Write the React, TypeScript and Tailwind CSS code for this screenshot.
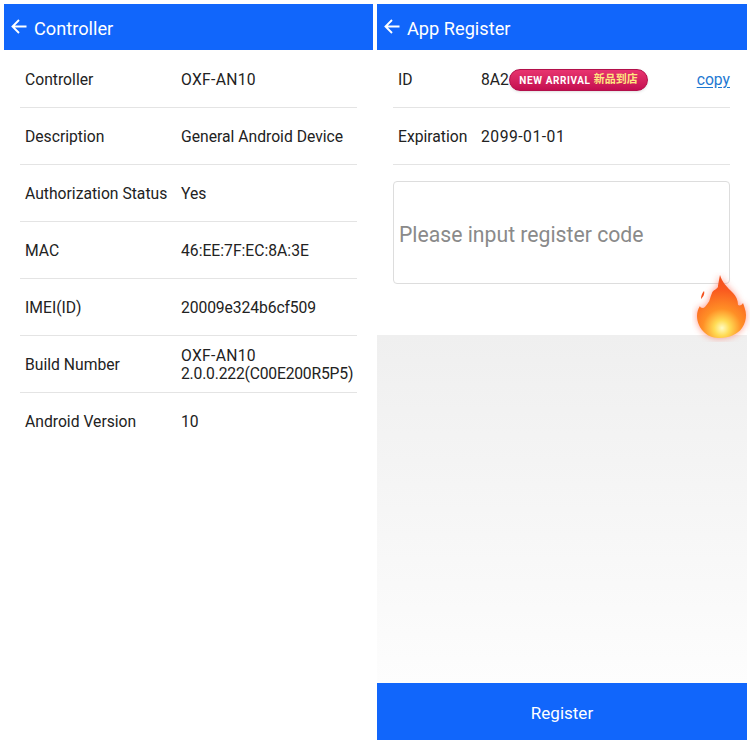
import React from "react"

type Row = {
  label: string
  value: React.ReactNode
}

const controllerRows: Row[] = [
  { label: "Controller", value: <span className="tracking-[0.3px]">OXF-AN10</span> },
  { label: "Description", value: "General Android Device" },
  { label: "Authorization Status", value: "Yes" },
  { label: "MAC", value: "46:EE:7F:EC:8A:3E" },
  { label: "IMEI(ID)", value: <span className="tracking-[-0.1px]">20009e324b6cf509</span> },
  {
    label: "Build Number",
    value: (
      <div className="pb-[1px]">
        <span className="tracking-[0.3px]">OXF-AN10</span>
        <br />
        <span className="tracking-[-0.2px]">2.0.0.222(C00E200R5P5)</span>
      </div>
    ),
  },
]

const Header = ({ title }: { title: string }) => (
  <div className="flex h-[46px] items-center bg-[#1166fb] pl-[6px] text-white">
    <svg width="18" height="18" viewBox="0 0 18 18" fill="none" stroke="currentColor" strokeWidth="1.9">
      <path d="M16.5 8.5H2.5M9 2L2.5 8.5L9 15" />
    </svg>
    <span className="ml-[6px] pt-[3px] text-[18.2px]">{title}</span>
  </div>
)

const flamePath =
  "M28 3C27 8 26 13 26 15C24 18 21 18 20 21C18 25 18 29 16 31C14 34 12 36 11 36C9 36 8 35 8 34C6 37 5 40 5 44C5 50 8 57 13 61C17 65 23 66 28 66C37 66 46 62 50 56C53 52 54 47 54 43C54 39 52 34 51 31C50 33 48 34 46 33C46 28 44 24 41 21C35 15 30 10 28 3Z"

const Fire = () => (
  <svg className="absolute left-[692px] top-[272px]" width="58" height="70" viewBox="0 0 58 70">
    <defs>
      <radialGradient id="flame" gradientUnits="userSpaceOnUse" cx="30" cy="56" r="48">
        <stop offset="0" stopColor="#fffbc4" />
        <stop offset="0.16" stopColor="#ffdc55" />
        <stop offset="0.4" stopColor="#ff8f26" />
        <stop offset="0.8" stopColor="#f9591f" />
        <stop offset="1" stopColor="#f4511e" />
      </radialGradient>
      <filter id="glow" x="-30%" y="-30%" width="160%" height="160%">
        <feGaussianBlur stdDeviation="3.5" />
      </filter>
    </defs>
    <path d={flamePath} fill="#ff6a55" opacity="0.7" filter="url(#glow)" />
    <path d={flamePath} fill="url(#flame)" />
    <path d="M12 19C13 22 11 25 9 27C9 24 10 21 12 19Z" fill="#f4511e" />
  </svg>
)

const App = () => {
  return (
    <div
      className="relative flex h-[744px] w-[750px] gap-[4px] overflow-hidden bg-white p-[4px] pr-[3px] text-[15.7px] text-[#222222]"
      style={{ fontFamily: 'Roboto, "Noto Sans CJK SC", sans-serif' }}>
      <div className="w-[369px]">
        <Header title="Controller" />
        <div className="px-[16px] pt-[1px]">
          {controllerRows.map(row => (
            <div key={row.label} className="flex h-[57px] items-center border-b border-[#e4e4e4] pl-[5px] pt-[2px]">
              <div className="w-[156px] shrink-0">{row.label}</div>
              <div className="leading-[18px]">{row.value}</div>
            </div>
          ))}
          <div className="flex h-[57px] items-center pl-[5px]">
            <div className="w-[156px] shrink-0">Android Version</div>
            <div>10</div>
          </div>
        </div>
      </div>

      <div className="flex h-[736px] w-[370px] flex-col">
        <Header title="App Register" />
        <div className="pl-[16px] pr-[17px] pt-[1px]">
          <div className="flex h-[57px] items-center border-b border-[#e4e4e4] pl-[5px] pt-[2px]">
            <div className="w-[83px] shrink-0">ID</div>
            <div>8A2</div>
            <a className="ml-auto text-[#1e78d2] underline underline-offset-2">copy</a>
          </div>
          <div className="flex h-[57px] items-center border-b border-[#e4e4e4] pl-[5px] pt-[2px]">
            <div className="w-[83px] shrink-0">Expiration</div>
            <div className="tracking-[0.5px]">2099-01-01</div>
          </div>
          <div className="mt-[16px] flex h-[103px] items-center rounded-[4px] border border-[#dddddd] px-[5px] pt-[4px] text-[21.2px] text-[#8a8a8a]">
            Please input register code
          </div>
        </div>
        <div className="mt-[51px] flex-1 bg-gradient-to-b from-[#efefef] to-[#fdfdfd]" />
        <div className="flex h-[57px] items-center justify-center bg-[#1166fb] pt-[4px] text-[17px] text-white">Register</div>
      </div>

      <div className="absolute left-[509px] top-[69px] flex h-[22px] w-[139px] items-center justify-center gap-[3px] rounded-full border border-[#b30f4a] bg-gradient-to-b from-[#e8336f] to-[#c40c50] text-[10px] font-bold shadow-sm">
        <span className="tracking-[0.6px] text-white">NEW ARRIVAL</span>
        <span className="text-[11px] text-[#ffe680]">新品到店</span>
      </div>
      <Fire />
    </div>
  )
}

export default App
